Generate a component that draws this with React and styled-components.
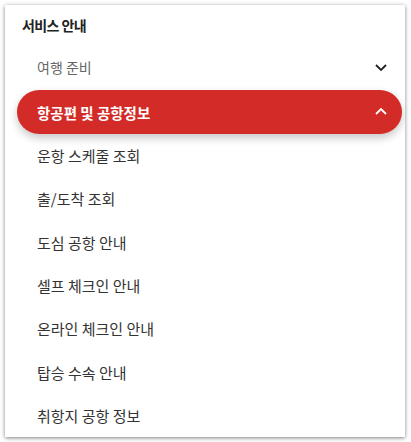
import styled, { createGlobalStyle } from 'styled-components'

const GlobalStyle = createGlobalStyle`
  body {
    margin: 0;
    background: #fff;
    font-family: 'Noto Sans CJK KR', 'Noto Sans', sans-serif;
  }
`

const subItems = [
  '운항 스케줄 조회',
  '출/도착 조회',
  '도심 공항 안내',
  '셀프 체크인 안내',
  '온라인 체크인 안내',
  '탑승 수속 안내',
  '취항지 공항 정보',
]

const Chevron = ({ up, color }) => (
  <svg width='12' height='8' viewBox='0 0 12 8'>
    <polyline
      points={up ? '1,7 6,2 11,7' : '1,1 6,6 11,1'}
      fill='none'
      stroke={color}
      strokeWidth='1.8'
    />
  </svg>
)

const App = () => {
  return (
    <Page>
      <GlobalStyle />
      <Panel>
        <Title>서비스 안내</Title>
        <Category>
          <span>여행 준비</span>
          <Chevron color='#222' />
        </Category>
        <ActiveCategory>
          <span>항공편 및 공항정보</span>
          <Chevron up color='#fff' />
        </ActiveCategory>
        <SubList>
          {subItems.map((item) => (
            <SubItem key={item}>{item}</SubItem>
          ))}
        </SubList>
      </Panel>
    </Page>
  )
}

const Page = styled.div`
  padding: 5px;
`

const Panel = styled.div`
  width: 400px;
  height: 432px;
  box-sizing: border-box;
  background: #fff;
  box-shadow: 0 1px 4px rgba(0, 0, 0, 0.5);
  padding-top: 10px;
  overflow: hidden;
`

const Title = styled.h2`
  margin: 0 0 0 17px;
  height: 30px;
  font-size: 14px;
  font-weight: 700;
  letter-spacing: -0.6px;
  color: #222;
  line-height: 20px;
`

const Category = styled.div`
  display: flex;
  align-items: center;
  justify-content: space-between;
  height: 44px;
  margin-left: 32px;
  padding-right: 18px;
  font-size: 14px;
  color: #666;
  svg {
    margin-top: 2px;
  }
`

const ActiveCategory = styled.div`
  display: flex;
  align-items: center;
  justify-content: space-between;
  height: 44px;
  margin: 1px 3px 0 12px;
  padding: 0 15px 0 20px;
  border-radius: 22px;
  background: #d32b27;
  color: #fff;
  font-size: 14.5px;
  font-weight: 700;
  box-shadow: 0 4px 8px rgba(0, 0, 0, 0.22);
  svg {
    margin-top: -2px;
  }
`

const SubList = styled.ul`
  list-style: none;
  margin: 0;
  padding: 0;
`

const SubItem = styled.li`
  display: flex;
  align-items: center;
  height: 43.3px;
  padding-left: 32px;
  font-size: 15px;
  color: #333;
`

export default App
